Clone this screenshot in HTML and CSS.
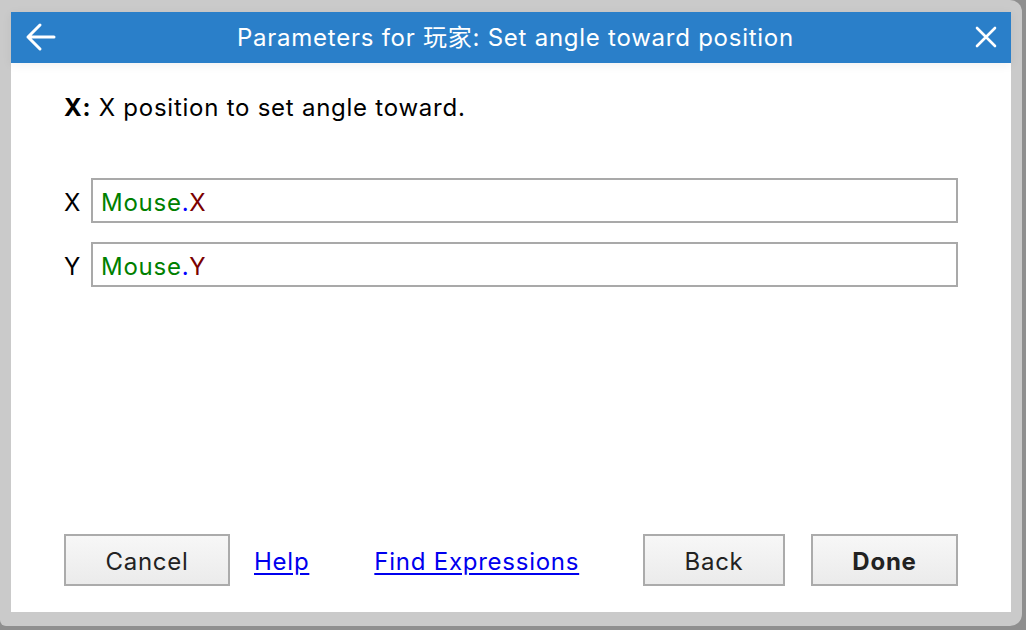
FILE: index.html
```html
<!DOCTYPE html>
<html>
<head>
<meta charset="utf-8">
<link rel="stylesheet" href="styles.css">
</head>
<body>
<div class="frame">
  <div class="dialog">
    <div class="header">
      <span class="hbtn back-btn">
        <svg width="32" height="30" viewBox="0 0 32 30"><path d="M3 15 H29 M15 3 L3 15 L15 27" fill="none" stroke="#fff" stroke-width="3" stroke-linecap="round" stroke-linejoin="round"/></svg>
      </span>
      <div class="title">Parameters for 玩家: Set angle toward position</div>
      <span class="hbtn close-btn">
        <svg width="24" height="24" viewBox="0 0 24 24"><path d="M3 3 L21 21 M21 3 L3 21" fill="none" stroke="#fff" stroke-width="2.6" stroke-linecap="round"/></svg>
      </span>
    </div>
    <div class="body">
      <p class="desc"><b>X:</b> X position to set angle toward.</p>
      <div class="fields">
        <div class="row">
          <span class="label">X</span>
          <div class="input"><span class="obj">Mouse</span><span class="dot">.</span><span class="prop">X</span></div>
        </div>
        <div class="row">
          <span class="label">Y</span>
          <div class="input"><span class="obj">Mouse</span><span class="dot">.</span><span class="prop">Y</span></div>
        </div>
      </div>
      <div class="footer">
        <button class="btn cancel">Cancel</button>
        <a class="link help" href="#">Help</a>
        <a class="link find" href="#">Find Expressions</a>
        <span class="spacer"></span>
        <button class="btn back">Back</button>
        <button class="btn done">Done</button>
      </div>
    </div>
  </div>
</div>
</body>
</html>
```

FILE: styles.css
```css
html, body {
  margin: 0;
  padding: 0;
}
body {
  width: 1026px;
  height: 630px;
  background: #8f8f8f;
  font-family: Inter, "Liberation Sans", "Noto Sans CJK SC", sans-serif;
  letter-spacing: 0.75px;
  overflow: hidden;
}
.frame {
  width: 1022px;
  height: 626px;
  background: #cacaca;
  border-radius: 0 12px 12px 6px;
  padding: 12px 0 0 11px;
  box-sizing: border-box;
}
.dialog {
  width: 1000px;
  height: 600px;
  background: #fff;
  display: flex;
  flex-direction: column;
}
.header {
  height: 51px;
  background: #2a7fc9;
  display: flex;
  align-items: center;
  color: #fff;
  position: relative;
  box-shadow: 0 2px 10px rgba(0,0,0,0.06);
}
.hbtn {
  display: flex;
  align-items: center;
  justify-content: center;
}
.back-btn {
  width: 32px;
  margin-left: 14px;
  margin-top: -2px;
}
.close-btn {
  width: 24px;
  margin-right: 13px;
  margin-top: -2px;
}
.title {
  flex: 1;
  text-align: center;
  font-size: 24px;
  line-height: 28px;
  margin-top: 1px;
  padding-left: 0;
}
.body {
  flex: 1;
  display: flex;
  flex-direction: column;
  padding: 31px 53px 26px 53px;
}
.desc {
  margin: 0;
  font-size: 24px;
  line-height: 28px;
  color: #000;
}
.fields {
  margin-top: 56px;
  display: flex;
  flex-direction: column;
  gap: 19px;
}
.row {
  display: flex;
  align-items: center;
}
.label {
  width: 27px;
  font-size: 24px;
  color: #000;
  padding-left: 0;
  padding-top: 3px;
  box-sizing: border-box;
}
.input {
  flex: 1;
  height: 45px;
  border: 2px solid #a9a9a9;
  box-sizing: border-box;
  display: flex;
  align-items: center;
  padding-left: 8px;
  padding-top: 4px;
  font-size: 24px;
}
.obj { color: #008000; }
.dot { color: #0000ff; }
.prop { color: #7a0000; }
.footer {
  margin-top: auto;
  display: flex;
  align-items: center;
}
.btn {
  height: 52px;
  border: 2px solid #ababab;
  background: linear-gradient(#f7f7f7, #ebebeb);
  font-family: inherit;
  font-size: 24px;
  letter-spacing: 0.75px;
  color: #222;
  padding: 2px 0 0 0;
  border-radius: 0;
}
.cancel { width: 166px; }
.back { width: 142px; }
.done { width: 147px; margin-left: 26px; font-weight: bold; }
.link {
  font-size: 24px;
  color: #0000ee;
  text-decoration: underline;
  text-underline-offset: 3px;
  padding-top: 2px;
}
.help { margin-left: 24px; }
.find { margin-left: 65px; }
.spacer { flex: 1; }
```
